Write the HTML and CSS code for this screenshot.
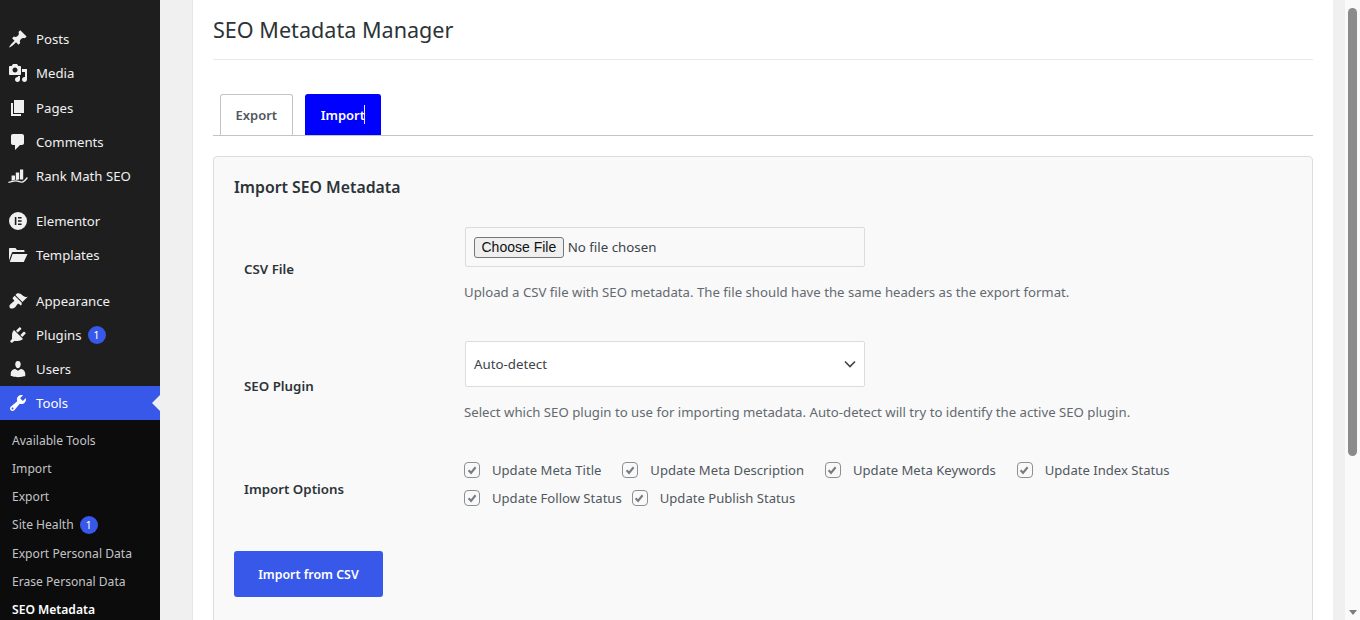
FILE: index.html
```html
<!DOCTYPE html>
<html lang="en">
  <head>
    <meta charset="UTF-8" />
    <meta name="viewport" content="width=device-width, initial-scale=1.0" />
    <title>SEO Metadata Manager</title>
    <link rel="stylesheet" href="styles.css">
  </head>
  <body>
    <div class="app">
      <nav class="sidebar">
        <ul class="menu">
          <li class="menu-item"><svg class="dash" viewBox="0 0 20 20"><path d="M10.44 3.02l1.82-1.82 6.36 6.35-1.83 1.82c-1.05-.68-2.48-.57-3.41.36l-.75.75c-.92.93-1.04 2.35-.35 3.41l-1.83 1.82-2.41-2.41-2.8 2.79c-.42.42-3.38 2.71-3.8 2.29s1.86-3.39 2.28-3.81l2.79-2.79L4.1 9.36l1.83-1.82c1.05.69 2.48.57 3.4-.36l.75-.75c.93-.92 1.05-2.35.36-3.41z"/></svg>Posts</li>
          <li class="menu-item"><svg class="dash" viewBox="0 0 20 20"><path d="M13 11V4c0-.55-.45-1-1-1h-1.67L9 1H5L3.67 3H2c-.55 0-1 .45-1 1v7c0 .55.45 1 1 1h10c.55 0 1-.45 1-1zM7 4.5c1.38 0 2.5 1.12 2.5 2.5S8.38 9.5 7 9.5 4.5 8.38 4.5 7 5.62 4.5 7 4.5zM14 6h5v10.5c0 1.38-1.12 2.5-2.5 2.5S14 17.88 14 16.5s1.12-2.5 2.5-2.5c.17 0 .34.02.5.05V9h-3V6zm-4 8.05V13h2v3.5c0 1.38-1.12 2.5-2.5 2.5S7 17.88 7 16.5 8.12 14 9.5 14c.17 0 .34.02.5.05z"/></svg>Media</li>
          <li class="menu-item"><svg class="dash" viewBox="0 0 20 20"><path d="M6 15V2h10v13H6zm-1 1h8v2H3V5h2v11z"/></svg>Pages</li>
          <li class="menu-item"><svg class="dash" viewBox="0 0 20 20"><path d="M5 2h9c1.1 0 2 .9 2 2v7c0 1.1-.9 2-2 2h-2l-5 5v-5H5c-1.1 0-2-.9-2-2V4c0-1.1.9-2 2-2z"/></svg>Comments</li>
          <li class="menu-item"><svg class="dash" viewBox="0 0 20 20"><path d="M3.6 9.6H7v4.2l-3.4.9zM7.8 6.4h3.4v7.2l-3.4.3zM12 3.4h3.2v10l-3.2.2z"/><path class="swoosh" d="M.4 16.4c2.6-.3 5-1.6 7.6-1.5 2 .1 3.6 1.4 6 1.2 2-.2 3.6-2.200 5.400-4.600"/></svg>Rank Math SEO</li>
        </ul>
        <ul class="menu menu-group">
          <li class="menu-item"><svg class="dash" viewBox="0 0 20 20"><path fill-rule="evenodd" d="M10 1a9 9 0 1 0 0 18 9 9 0 0 0 0-18zM6.800 6h1.600v8H6.800zM10 6h3.600v1.600H10zM10 9.200h3.600v1.600H10zM10 12.400h3.600V14H10z"/></svg>Elementor</li>
          <li class="menu-item"><svg class="dash" viewBox="0 0 20 20"><path d="M1 5v10.500l2.800-7.600c.2-.5.6-.9 1.200-.9h11.500V6c0-.6-.4-1-1-1H9L7.500 3H2C1.400 3 1 3.400 1 4zM4.600 9 1.800 17H15.800l3.700-8z"/></svg>Templates</li>
        </ul>
        <ul class="menu menu-group group-last">
          <li class="menu-item"><svg class="dash" viewBox="0 0 20 20"><path d="M14.48 11.06L7.41 3.99l1.5-1.5c.5-.56 2.3-.47 3.51.32 1.21.8 1.43 1.28 2.91 2.1 1.18.64 2.45 1.26 4.45.85zm-.71.71L6.7 4.7 4.93 6.47c-.39.39-.39 1.02 0 1.41l1.06 1.06c.39.39.39 1.03 0 1.42-.6.6-1.43 1.11-2.21 1.69-.35.26-.7.53-1.01.84C1.43 13.23.91 15.95 1.97 17c1.06 1.05 3.8.53 5.15-.82.31-.31.58-.66.84-1.01.58-.78 1.09-1.61 1.69-2.21.39-.39 1.02-.39 1.41 0l1.06 1.06c.39.39 1.03.39 1.42 0z"/></svg>Appearance</li>
          <li class="menu-item"><svg class="dash" viewBox="0 0 20 20"><path d="M13.11 4.36L9.87 7.6 8 5.73l3.24-3.24c.35-.34 1.05-.2 1.56.32.52.51.66 1.21.31 1.55zm-8 1.77l.91-1.12 9.01 9.01-1.19.84c-.71.71-2.63 1.16-3.82 1.16H6.14L4.9 17.26c-.59.59-1.54.59-2.12 0-.59-.58-.59-1.53 0-2.12l1.24-1.24v-3.88c0-1.13.4-3.19 1.09-3.89zm7.26 3.97l3.24-3.24c.34-.35 1.04-.21 1.55.31.52.51.66 1.21.31 1.55l-3.24 3.25z"/></svg>Plugins<span class="count">1</span></li>
          <li class="menu-item"><svg class="dash" viewBox="0 0 20 20"><path d="M10 9.25c-2.27 0-2.73-3.44-2.73-3.44C7 4.02 7.82 2 9.97 2c2.16 0 2.98 2.02 2.71 3.81 0 0-.41 3.44-2.68 3.44zm0 2.57L12.72 10c2.39 0 4.52 2.33 4.52 4.53v2.49s-3.65 1.13-7.24 1.13c-3.65 0-7.24-1.13-7.24-1.13v-2.49c0-2.25 1.94-4.48 4.47-4.48z"/></svg>Users</li>
          <li class="menu-item active"><svg class="dash" viewBox="0 0 20 20"><path d="M16.68 9.77c-1.34 1.34-3.3 1.67-4.95.99l-5.41 6.52c-.99.99-2.59.99-3.58 0s-.99-2.59 0-3.57l6.52-5.42c-.68-1.65-.35-3.61.99-4.95 1.28-1.28 3.12-1.62 4.72-1.06l-2.89 2.89 2.82 2.82 2.86-2.87c.53 1.58.18 3.39-1.08 4.65zM3.81 16.21c.4.39 1.04.39 1.43 0 .4-.4.4-1.04 0-1.43-.39-.4-1.03-.4-1.43 0-.39.39-.39 1.03 0 1.43z"/></svg>Tools</li>
        </ul>
        <ul class="submenu">
          <li>Available Tools</li>
          <li>Import</li>
          <li>Export</li>
          <li>Site Health<span class="count">1</span></li>
          <li>Export Personal Data</li>
          <li>Erase Personal Data</li>
          <li class="current">SEO Metadata</li>
        </ul>
      </nav>

      <main class="content">
        <div class="wrap">
          <h1>SEO Metadata Manager</h1>

          <div class="tabs">
            <a class="tab">Export</a>
            <a class="tab tab-active">Import<span class="caret"></span></a>
          </div>

          <section class="card">
            <h2>Import SEO Metadata</h2>

            <div class="form-row row-file">
              <div class="form-label label-low">CSV File</div>
              <div>
                <div class="file-box"><span class="file-btn">Choose File</span><span class="file-name">No file chosen</span></div>
                <p class="hint">Upload a CSV file with SEO metadata. The file should have the same headers as the export format.</p>
              </div>
            </div>

            <div class="form-row row-plugin">
              <div class="form-label label-low">SEO Plugin</div>
              <div>
                <div class="select-box">Auto-detect
                  <svg class="chevron" viewBox="0 0 12 8"><path d="M1 1.500l5 5 5-5" /></svg>
                </div>
                <p class="hint">Select which SEO plugin to use for importing metadata. Auto-detect will try to identify the active SEO plugin.</p>
              </div>
            </div>

            <div class="form-row row-options">
              <div class="form-label label-options">Import Options</div>
              <div class="options">
                <label class="check"><span class="box"><svg viewBox="0 0 16 16"><path d="M3.200 7.800l3 3.200 5.600-7" /></svg></span>Update Meta Title</label>
                <label class="check"><span class="box"><svg viewBox="0 0 16 16"><path d="M3.200 7.800l3 3.200 5.600-7" /></svg></span>Update Meta Description</label>
                <label class="check"><span class="box"><svg viewBox="0 0 16 16"><path d="M3.200 7.800l3 3.200 5.600-7" /></svg></span>Update Meta Keywords</label>
                <label class="check"><span class="box"><svg viewBox="0 0 16 16"><path d="M3.200 7.800l3 3.200 5.600-7" /></svg></span>Update Index Status</label>
                <label class="check check-tight"><span class="box"><svg viewBox="0 0 16 16"><path d="M3.200 7.800l3 3.200 5.600-7" /></svg></span>Update Follow Status</label>
                <label class="check"><span class="box"><svg viewBox="0 0 16 16"><path d="M3.200 7.800l3 3.200 5.600-7" /></svg></span>Update Publish Status</label>
              </div>
            </div>

            <button class="primary">Import from CSV</button>
          </section>
        </div>
      </main>

      <div class="scrollbar">
        <div class="thumb"></div>
        <div class="arrow"></div>
      </div>
    </div>
  </body>
</html>
```

FILE: styles.css
```css
* {
  box-sizing: border-box;
}

html, body {
  margin: 0;
  height: 100%;
  overflow: hidden;
}

body {
  font-family: "Noto Sans", sans-serif;
  font-size: 13px;
  color: #3c434a;
  background: #f0f0f1;
}

ul {
  list-style: none;
  margin: 0;
  padding: 0;
}

.app {
  display: flex;
  height: 620px;
}

/* sidebar */
.sidebar {
  width: 160px;
  flex-shrink: 0;
  background: #1e1e1e;
  padding-top: 22px;
  overflow: hidden;
}

.menu-group {
  margin-top: 10.75px;
}

.group-last {
  margin-top: 11.25px;
}

.group-last .menu-item {
  height: 34.1px;
}

.menu-item {
  display: flex;
  align-items: center;
  height: 34.25px;
  padding-left: 8px;
  color: #f0f0f1;
  font-size: 13.2px;
  position: relative;
}

.dash {
  width: 20px;
  height: 20px;
  margin-right: 8px;
  fill: #f0f0f1;
  flex-shrink: 0;
}

.swoosh {
  fill: none;
  stroke: #f0f0f1;
  stroke-width: 1.3;
}

.menu-item.active {
  background: #3858e9;
  color: #fff;
}

.menu-item.active .dash {
  fill: #fff;
}

.menu-item.active::after {
  content: "";
  position: absolute;
  right: 0;
  top: 9px;
  border: 8px solid transparent;
  border-right-color: #f0f0f1;
  border-left-width: 0;
}

.count {
  display: inline-block;
  width: 18px;
  height: 18px;
  margin-left: 6px;
  border-radius: 50%;
  background: #3858e9;
  color: #fff;
  font-size: 11px;
  line-height: 18px;
  text-align: center;
}

.submenu {
  background: #0c0c0c;
  padding: 6.25px 0 10px 12px;
  color: #c3c4c7;
  font-size: 12.1px;
}

.submenu li {
  display: flex;
  align-items: center;
  height: 28.15px;
}

.submenu .current {
  color: #fff;
  font-weight: 600;
}

/* main area */
.content {
  flex: 1;
  min-width: 0;
  padding: 0 12px 0 32px;
}

.wrap {
  background: #fff;
  height: 100%;
  padding: 0 20px;
  border-left: 1px solid #e6e6e6;
  overflow: hidden;
}

h1 {
  margin: 0;
  height: 60px;
  padding-top: 14px;
  font-size: 21.6px;
  font-weight: 400;
  line-height: 32px;
  color: #2c3338;
  border-bottom: 1px solid #e8e8e8;
}

.tabs {
  display: flex;
  gap: 12px;
  margin-top: 34px;
  padding-left: 7px;
  border-bottom: 1px solid #c3c4c7;
  height: 42px;
}

.tab {
  height: 41px;
  padding: 0 14.5px;
  line-height: 40px;
  font-size: 13px;
  font-weight: 600;
  color: #50575e;
  background: #fff;
  border: 1px solid #c3c4c7;
  border-bottom: none;
  border-radius: 3px 3px 0 0;
}

.tab-active {
  padding: 0 15px;
  background: #0000ff;
  border-color: #0000ff;
  color: #fff;
  position: relative;
}

.caret {
  position: absolute;
  right: 15px;
  top: 10px;
  width: 1px;
  height: 19px;
  background: #e8e8ff;
}

.card {
  margin-top: 20px;
  padding: 19px 20px 0;
  height: 500px;
  background: #f9f9f9;
  border: 1px solid #dcdcde;
  border-radius: 4px;
}

h2 {
  margin: 0;
  font-size: 15.8px;
  font-weight: 600;
  line-height: 22px;
  color: #2c3338;
}

.form-row {
  display: grid;
  grid-template-columns: 230px 1fr;
  align-items: center;
}

.form-label {
  padding-left: 10px;
  font-size: 13.3px;
  font-weight: 600;
  color: #2c3338;
}

.label-low {
  padding-top: 10px;
}

.label-options {
  padding-top: 10px;
}

.row-file {
  margin-top: 29px;
}

.row-plugin {
  margin-top: 40px;
}

.row-options {
  margin-top: 38px;
}

.file-box {
  display: flex;
  align-items: center;
  width: 400px;
  height: 40px;
  margin-left: 1px;
  padding-left: 8px;
  background: #f9f9f9;
  border: 1px solid #dcdcde;
  border-radius: 2px;
}

.file-btn {
  height: 21px;
  padding: 0 6.5px;
  line-height: 19px;
  font-family: "Liberation Sans", sans-serif;
  font-size: 14px;
  color: #111;
  background: #efefef;
  border: 1px solid #767676;
  border-radius: 3px;
}

.file-name {
  margin-left: 4px;
  font-size: 13.3px;
  color: #3c434a;
}

.hint {
  margin: 16px 0 0;
  font-size: 13.2px;
  line-height: 18px;
  color: #646970;
}

.select-box {
  display: flex;
  align-items: center;
  justify-content: space-between;
  width: 400px;
  height: 46px;
  margin-left: 1px;
  padding: 0 8px;
  font-size: 13.3px;
  background: #fff;
  border: 1px solid #dcdcde;
  border-radius: 2px;
}

.chevron {
  width: 12px;
  height: 8px;
  fill: none;
  stroke: #3c434a;
  stroke-width: 1.6;
}

.options {
  display: flex;
  flex-wrap: wrap;
  row-gap: 6px;
  column-gap: 12px;
}

.check {
  display: flex;
  align-items: center;
  height: 22px;
  font-size: 13.1px;
  color: #50575e;
  margin-right: 8.9px;
}

.check-tight {
  margin-right: -2px;
}

.box {
  width: 16px;
  height: 16px;
  margin-right: 12px;
  background: #f9f9f9;
  border: 1.5px solid #8c8f94;
  border-radius: 4px;
  display: flex;
  align-items: center;
  justify-content: center;
}

.box svg {
  width: 13px;
  height: 13px;
  flex-shrink: 0;
  fill: none;
  stroke: #787c82;
  stroke-width: 2.6;
}

.primary {
  display: block;
  margin-top: 42px;
  width: 149px;
  height: 46px;
  font-family: inherit;
  font-size: 12.4px;
  font-weight: 600;
  color: #fff;
  background: #3858e9;
  border: none;
  border-radius: 3px;
}

/* scrollbar */
.scrollbar {
  width: 15px;
  flex-shrink: 0;
  background: #fafafa;
  padding: 8px 3px 5px;
  display: flex;
  flex-direction: column;
  justify-content: space-between;
  align-items: center;
}

.thumb {
  width: 9px;
  height: 448px;
  background: #8b8b8b;
  border-radius: 5px;
}

.arrow {
  border: 4.5px solid transparent;
  border-top: 5px solid #7d7d7d;
  border-bottom: none;
}
```
